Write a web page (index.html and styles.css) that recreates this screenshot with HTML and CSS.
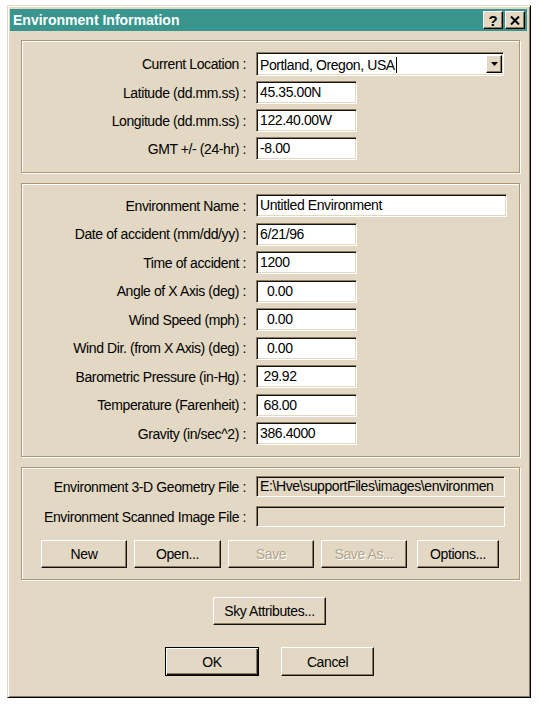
FILE: index.html
```html
<!DOCTYPE html>
<html lang="en">

<head>
    <meta charset="UTF-8" />
    <title>Environment Information</title>
    <link rel="stylesheet" href="styles.css">
</head>

<body>

    <div class="window">

        <!-- title bar -->
        <div class="titlebar">
            <span class="title">Environment Information</span>
            <div class="title-buttons">
                <div class="tbtn">?</div>
                <div class="tbtn">
                    <svg width="10" height="9" viewBox="0 0 10 9">
                        <path d="M1 0.5 L9 8.5 M9 0.5 L1 8.5" stroke="#000" stroke-width="2" />
                    </svg>
                </div>
            </div>
        </div>

        <div class="content">

            <!-- location -->
            <div class="group group-location">
                <div class="label">Current Location :</div>
                <div class="field combo">
                    <span class="combo-text">Portland, Oregon, USA<span class="caret"></span></span>
                    <span class="combo-btn">
                        <svg width="7" height="4" viewBox="0 0 7 4"><path d="M0 0 H7 L3.5 4 Z" fill="#000" /></svg>
                    </span>
                </div>
                <div class="label">Latitude (dd.mm.ss) :</div>
                <div class="field short">45.35.00N</div>
                <div class="label">Longitude (dd.mm.ss) :</div>
                <div class="field short">122.40.00W</div>
                <div class="label">GMT +/- (24-hr) :</div>
                <div class="field short">-8.00</div>
            </div>

            <!-- environment -->
            <div class="group group-env">
                <div class="label">Environment Name :</div>
                <div class="field long">Untitled Environment</div>
                <div class="label">Date of accident (mm/dd/yy) :</div>
                <div class="field short">6/21/96</div>
                <div class="label">Time of accident :</div>
                <div class="field short">1200</div>
                <div class="label">Angle of X Axis (deg) :</div>
                <div class="field short">&nbsp;&nbsp;0.00</div>
                <div class="label">Wind Speed (mph) :</div>
                <div class="field short">&nbsp;&nbsp;0.00</div>
                <div class="label">Wind Dir. (from X Axis) (deg) :</div>
                <div class="field short">&nbsp;&nbsp;0.00</div>
                <div class="label">Barometric Pressure (in-Hg) :</div>
                <div class="field short">&nbsp;29.92</div>
                <div class="label">Temperature (Farenheit) :</div>
                <div class="field short">&nbsp;68.00</div>
                <div class="label">Gravity (in/sec^2) :</div>
                <div class="field short">386.4000</div>
            </div>

            <!-- files -->
            <div class="group group-files">
                <div class="label">Environment 3-D Geometry File :</div>
                <div class="field file readonly">E:\Hve\supportFiles\images\environmen</div>
                <div class="label">Environment Scanned Image File :</div>
                <div class="field file readonly"></div>
                <div class="file-buttons">
                    <div class="btn btn-new">New</div>
                    <div class="btn btn-open">Open...</div>
                    <div class="btn btn-save disabled">Save</div>
                    <div class="btn btn-saveas disabled">Save As...</div>
                    <div class="btn btn-options">Options...</div>
                </div>
            </div>

            <div class="sky-row">
                <div class="btn btn-sky">Sky Attributes...</div>
            </div>

            <div class="dialog-buttons">
                <div class="btn btn-ok">OK</div>
                <div class="btn btn-cancel">Cancel</div>
            </div>

        </div>
    </div>

</body>

</html>
```

FILE: styles.css
```css
* {
    box-sizing: border-box;
}

html,
body {
    margin: 0;
    padding: 0;
    background: #fff;
    color: #000;
    font-family: "Liberation Sans", Arial, sans-serif;
    font-size: 14px;
    letter-spacing: -0.4px;
}

/* window frame */
.window {
    width: 524px;
    height: 693px;
    margin: 5px 0 0 7px;
    padding: 3px 3px 3px 2px;
    background: #e2d8c4;
    border: 1px solid;
    border-color: #e2d8c4 #000 #000 #e2d8c4;
    box-shadow: inset 1px 1px 0 #fff, inset -1px -1px 0 #8c7a5c;
    display: flex;
    flex-direction: column;
}

.titlebar {
    height: 22px;
    background: #38968e;
    color: #fff;
    display: flex;
    align-items: center;
    justify-content: space-between;
    padding: 0 2px 0 3px;
}

.title {
    font-weight: bold;
    letter-spacing: 0;
}

.title-buttons {
    display: flex;
    gap: 2px;
}

.tbtn {
    width: 20px;
    height: 18px;
    background: #e2d8c4;
    color: #000;
    font-weight: bold;
    font-size: 15px;
    border: 1px solid;
    border-color: #fff #000 #000 #fff;
    box-shadow: inset -1px -1px 0 #8c7a5c;
    display: flex;
    justify-content: center;
    align-items: center;
}

.content {
    padding: 9px 7px 0 11px;
    display: flex;
    flex-direction: column;
}

/* group boxes */
.group {
    border: 1px solid #ad9673;
    box-shadow: inset 1px 1px 0 #fff, 1px 1px 0 #fff;
    display: grid;
    grid-template-columns: 224px max-content;
    column-gap: 10px;
    align-items: center;
}

.group-location {
    padding: 11px 0 12px;
    row-gap: 5px;
}

.group-env {
    margin-top: 10px;
    padding: 10px 0 11px;
    row-gap: 5.5px;
}

.group-files {
    margin-top: 10px;
    padding: 8px 0 11px;
    row-gap: 9px;
}

.label {
    text-align: right;
    white-space: nowrap;
}

/* sunken fields */
.field {
    height: 23px;
    line-height: 21px;
    padding: 0 3px;
    background: #fff;
    border: 1px solid;
    border-color: #8c7a5c #fff #fff #8c7a5c;
    box-shadow: inset 1px 1px 0 #111, inset -1px -1px 0 #e2d8c4;
    white-space: nowrap;
    overflow: hidden;
}

.short {
    width: 101px;
}

.long {
    width: 251px;
}

.file {
    width: 249px;
    height: 21px;
    line-height: 19px;
}

.readonly {
    background: #e2d8c4;
}

.combo {
    width: 248px;
    height: 24px;
    display: flex;
    padding: 2px 1px 2px 3px;
    line-height: 20px;
}

.combo-text {
    flex: 1;
}

.caret {
    display: inline-block;
    width: 1px;
    height: 16px;
    background: #000;
    vertical-align: -3px;
    margin-left: 1px;
}

.combo-btn {
    width: 16px;
    background: #e2d8c4;
    border: 1px solid;
    border-color: #fff #000 #000 #fff;
    box-shadow: inset -1px -1px 0 #8c7a5c;
    display: flex;
    justify-content: center;
    align-items: center;
}

/* push buttons */
.btn {
    height: 28px;
    background: #e2d8c4;
    border: 1px solid;
    border-color: #fff #111 #111 #fff;
    box-shadow: inset -1px -1px 0 #8c7a5c;
    display: flex;
    justify-content: center;
    align-items: center;
    white-space: nowrap;
}

.btn.disabled {
    color: #b3a589;
    text-shadow: 1px 1px 0 #fff;
}

.file-buttons {
    grid-column: 1 / span 2;
    display: flex;
    gap: 7px;
    margin-top: 4px;
    padding-left: 19px;
}

.btn-new { width: 86px; }
.btn-open { width: 87px; }
.btn-save { width: 86px; }
.btn-saveas { width: 86px; }
.btn-options { width: 82px; margin-left: 3px; }

.sky-row {
    display: flex;
    justify-content: center;
    margin-top: 17px;
    padding-right: 2px;
}

.btn-sky {
    width: 113px;
}

.dialog-buttons {
    display: flex;
    justify-content: center;
    gap: 22px;
    margin-top: 22px;
    padding-right: 2px;
}

.btn-ok {
    width: 94px;
    height: 29px;
    border-color: #000;
    box-shadow: inset 1px 1px 0 #fff, inset -1px -1px 0 #111, inset -2px -2px 0 #8c7a5c;
}

.btn-cancel {
    width: 93px;
    height: 29px;
}
```
